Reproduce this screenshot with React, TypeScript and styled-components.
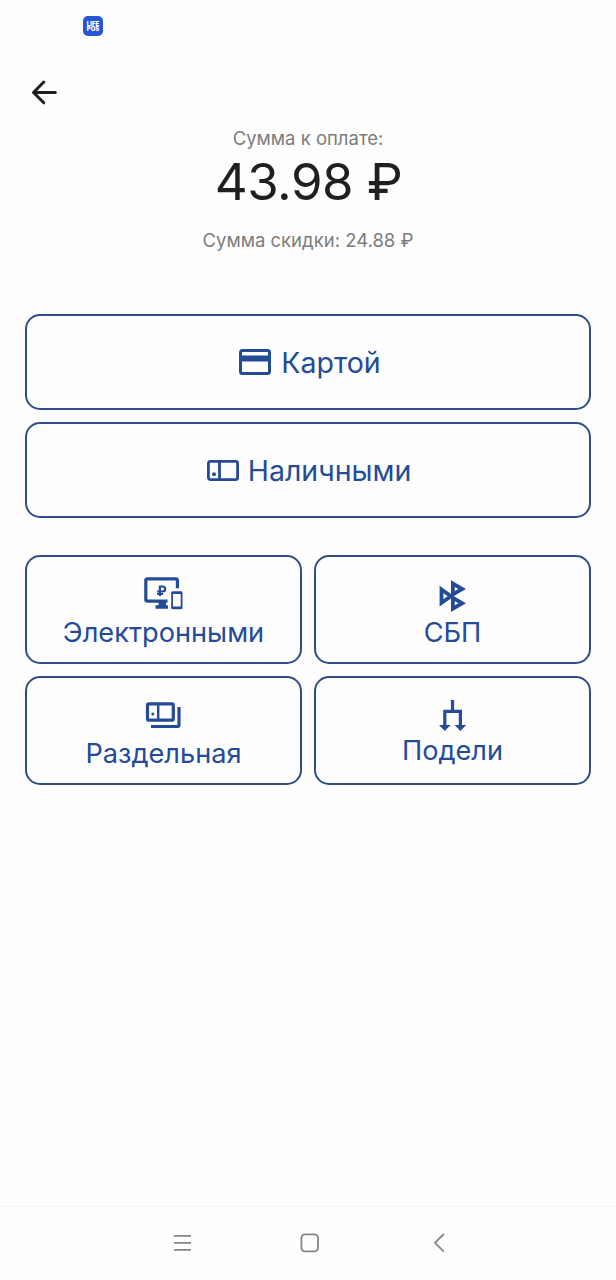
import React from "react";
import styled, { createGlobalStyle } from "styled-components";

const blue = "#244b98";

const GlobalStyle = createGlobalStyle`
  * { box-sizing: border-box; }
  body { margin: 0; background: #fefefe; font-family: Inter, "Liberation Sans", sans-serif; }
`;

const Screen = styled.main`
  height: 1280px;
  display: flex;
  flex-direction: column;
  background: #fefefe;
`;

const StatusBar = styled.div`
  height: 52px;
  padding: 16px 0 0 83px;
`;

const AppBadge = styled.div`
  width: 20px;
  height: 20px;
  border-radius: 5px;
  background: #2456d6;
  color: #fff;
  font-size: 6px;
  line-height: 5px;
  font-weight: 900;
  text-align: center;
  padding-top: 5px;
`;

const Header = styled.header`
  height: 76px;
  padding: 26px 0 0 30px;
`;

const BackButton = styled.button`
  display: block;
  padding: 0;
  border: 0;
  background: none;
  height: 28px;
`;

const Icon = styled.svg`
  display: block;
  flex: none;
  overflow: visible;
`;

const Summary = styled.section`
  height: 186px;
  display: flex;
  flex-direction: column;
  align-items: center;
`;

const Caption = styled.div`
  height: 20px;
  line-height: 20px;
  font-size: 18.5px;
  font-weight: 400;
  color: #7c7c7c;
`;

const Amount = styled.div`
  height: 82px;
  line-height: 68px;
  font-size: 51px;
  letter-spacing: -0.5px;
  padding-left: 1px;
  color: #1f1f1f;
`;

const Methods = styled.section`
  padding: 0 25px;
  display: grid;
  grid-template-columns: 1fr 1fr;
  column-gap: 12px;
`;

const Method = styled.button`
  margin: 0;
  display: flex;
  align-items: center;
  border: 2px solid #2f4e87;
  border-radius: 15px;
  background: #fefefe;
  color: ${blue};
  font-family: inherit;
`;

const WideMethod = styled(Method)<{ $gap: number; $shift: number; $below: number }>`
  grid-column: 1 / -1;
  height: 96px;
  margin-bottom: ${(p) => p.$below}px;
  padding: 0 0 0 ${(p) => p.$shift}px;
  justify-content: center;
  gap: ${(p) => p.$gap}px;
  font-size: 28.5px;
  line-height: 36px;
`;

const TileMethod = styled(Method)<{ $top: number; $gap: number; $below?: number }>`
  height: 109px;
  margin-bottom: ${(p) => p.$below ?? 0}px;
  padding: ${(p) => p.$top}px 0 0;
  flex-direction: column;
  gap: ${(p) => p.$gap}px;
  font-size: 27.2px;
  line-height: 36px;
`;

const WideLabel = styled.span`
  padding-top: 2px;
`;

const NavBar = styled.nav`
  height: 74px;
  margin-top: auto;
  padding: 26px 171px 0 173px;
  display: grid;
  grid-template-columns: 127px 1fr 11px;
  border-top: 1px solid #f1f1f1;
`;

const BackIcon = () => (
  <Icon width="28" height="28" fill="none" stroke="#1f1f1f" strokeWidth="3" strokeLinecap="round" strokeLinejoin="round">
    <path d="M25.3 14.5H3.5M13.8 4 3.5 14.5 13.8 24.8" />
  </Icon>
);

const CardIcon = () => (
  <Icon width="32" height="26" fill="none" stroke={blue} strokeWidth="3">
    <rect x="1.5" y="1.5" width="29" height="23" rx="2" />
    <path d="M1.5 9.5h29" strokeWidth="6" />
  </Icon>
);

const CashIcon = () => (
  <Icon width="32" height="21" fill="none" stroke={blue} strokeWidth="2.8">
    <rect x="1.4" y="1.4" width="29.2" height="18.2" rx="2" />
    <path d="M12.5 1.4v18.2" />
    <circle cx="7" cy="14.3" r="2" fill={blue} stroke="none" />
  </Icon>
);

const DevicesIcon = () => (
  <Icon width="39" height="32" fill="none" stroke={blue}>
    <path d="M33.4 11.3V3.5q0-1.7-1.7-1.7H3.5Q1.8 1.8 1.8 3.5v19q0 1.7 1.7 1.7h20" strokeWidth="3.2" />
    <path d="M14.5 25h7.5v3.2h2v3.5H11.5v-3.5h3z" fill={blue} stroke="none" />
    <path d="M15.9 19V9.5h2.8a2.5 2.5 0 0 1 0 5h-5.6M13.1 17h6" strokeWidth="2.2" />
    <rect x="28.1" y="15.3" width="9.5" height="16" rx="1" strokeWidth="1.8" />
    <path d="M27.5 15.8h10.7M27.5 30.7h10.7" strokeWidth="2.6" />
  </Icon>
);

const SbpIcon = () => (
  <Icon width="27" height="32" fill="none" stroke={blue} strokeWidth="3.8">
    <path d="M2.5 9.5v13.4l9.4-6.7z" />
    <path d="M13.9 3.6v10.8l9.3-5.4z" />
    <path d="M13.9 17.8v10.8l9.3-5.4z" />
  </Icon>
);

const SplitIcon = () => (
  <Icon width="35" height="26" fill="none" stroke={blue} strokeWidth="3.2">
    <rect x="1.5" y="1.8" width="25.8" height="16.4" rx="1.5" />
    <path d="M12.2 1.5v16.7" strokeWidth="2.4" />
    <circle cx="6.8" cy="12" r="1.5" fill={blue} stroke="none" />
    <path d="M33 5v18q0 1.5-1.5 1.5H5" />
  </Icon>
);

const ShareIcon = () => (
  <Icon width="27" height="31" fill="none" stroke={blue} strokeWidth="3.2">
    <path d="M13.5 0v11M5.8 26V11.4h15.6V26" />
    <path d="M0 25h11.6l-5.8 6zM15.6 25h11.6l-5.8 6z" fill={blue} stroke="none" />
  </Icon>
);

const MenuIcon = () => (
  <Icon width="19" height="20" fill="none" stroke="#858585" strokeWidth="1.7">
    <path d="M1 2.8h17M1 9.9h17M1 16.8h17" />
  </Icon>
);

const HomeIcon = () => (
  <Icon width="19" height="20" fill="none" stroke="#858585" strokeWidth="1.8">
    <rect x="1.4" y="1.3" width="16.6" height="17" rx="3.5" />
  </Icon>
);

const ChevronIcon = () => (
  <Icon width="11" height="20" fill="none" stroke="#858585" strokeWidth="1.8">
    <path d="M9.8 1 1 9.8l8.8 8.8" />
  </Icon>
);

export default function App() {
  return (
    <Screen>
      <GlobalStyle />
      <StatusBar>
        <AppBadge>
          LIFE<br />POS
        </AppBadge>
      </StatusBar>
      <Header>
        <BackButton aria-label="Назад"><BackIcon /></BackButton>
      </Header>
      <Summary>
        <Caption>Сумма к оплате:</Caption>
        <Amount>43.98 ₽</Amount>
        <Caption>Сумма скидки: 24.88 ₽</Caption>
      </Summary>
      <Methods>
        <WideMethod $gap={10} $shift={4} $below={12}><CardIcon /><WideLabel>Картой</WideLabel></WideMethod>
        <WideMethod $gap={9} $shift={2} $below={37}><CashIcon /><WideLabel>Наличными</WideLabel></WideMethod>
        <TileMethod $top={20} $gap={6} $below={12}><DevicesIcon />Электронными</TileMethod>
        <TileMethod $top={23} $gap={3} $below={12}><SbpIcon />СБП</TileMethod>
        <TileMethod $top={24} $gap={8}><SplitIcon />Раздельная</TileMethod>
        <TileMethod $top={22} $gap={2}><ShareIcon />Подели</TileMethod>
      </Methods>
      <NavBar>
        <MenuIcon />
        <HomeIcon />
        <ChevronIcon />
      </NavBar>
    </Screen>
  );
}
